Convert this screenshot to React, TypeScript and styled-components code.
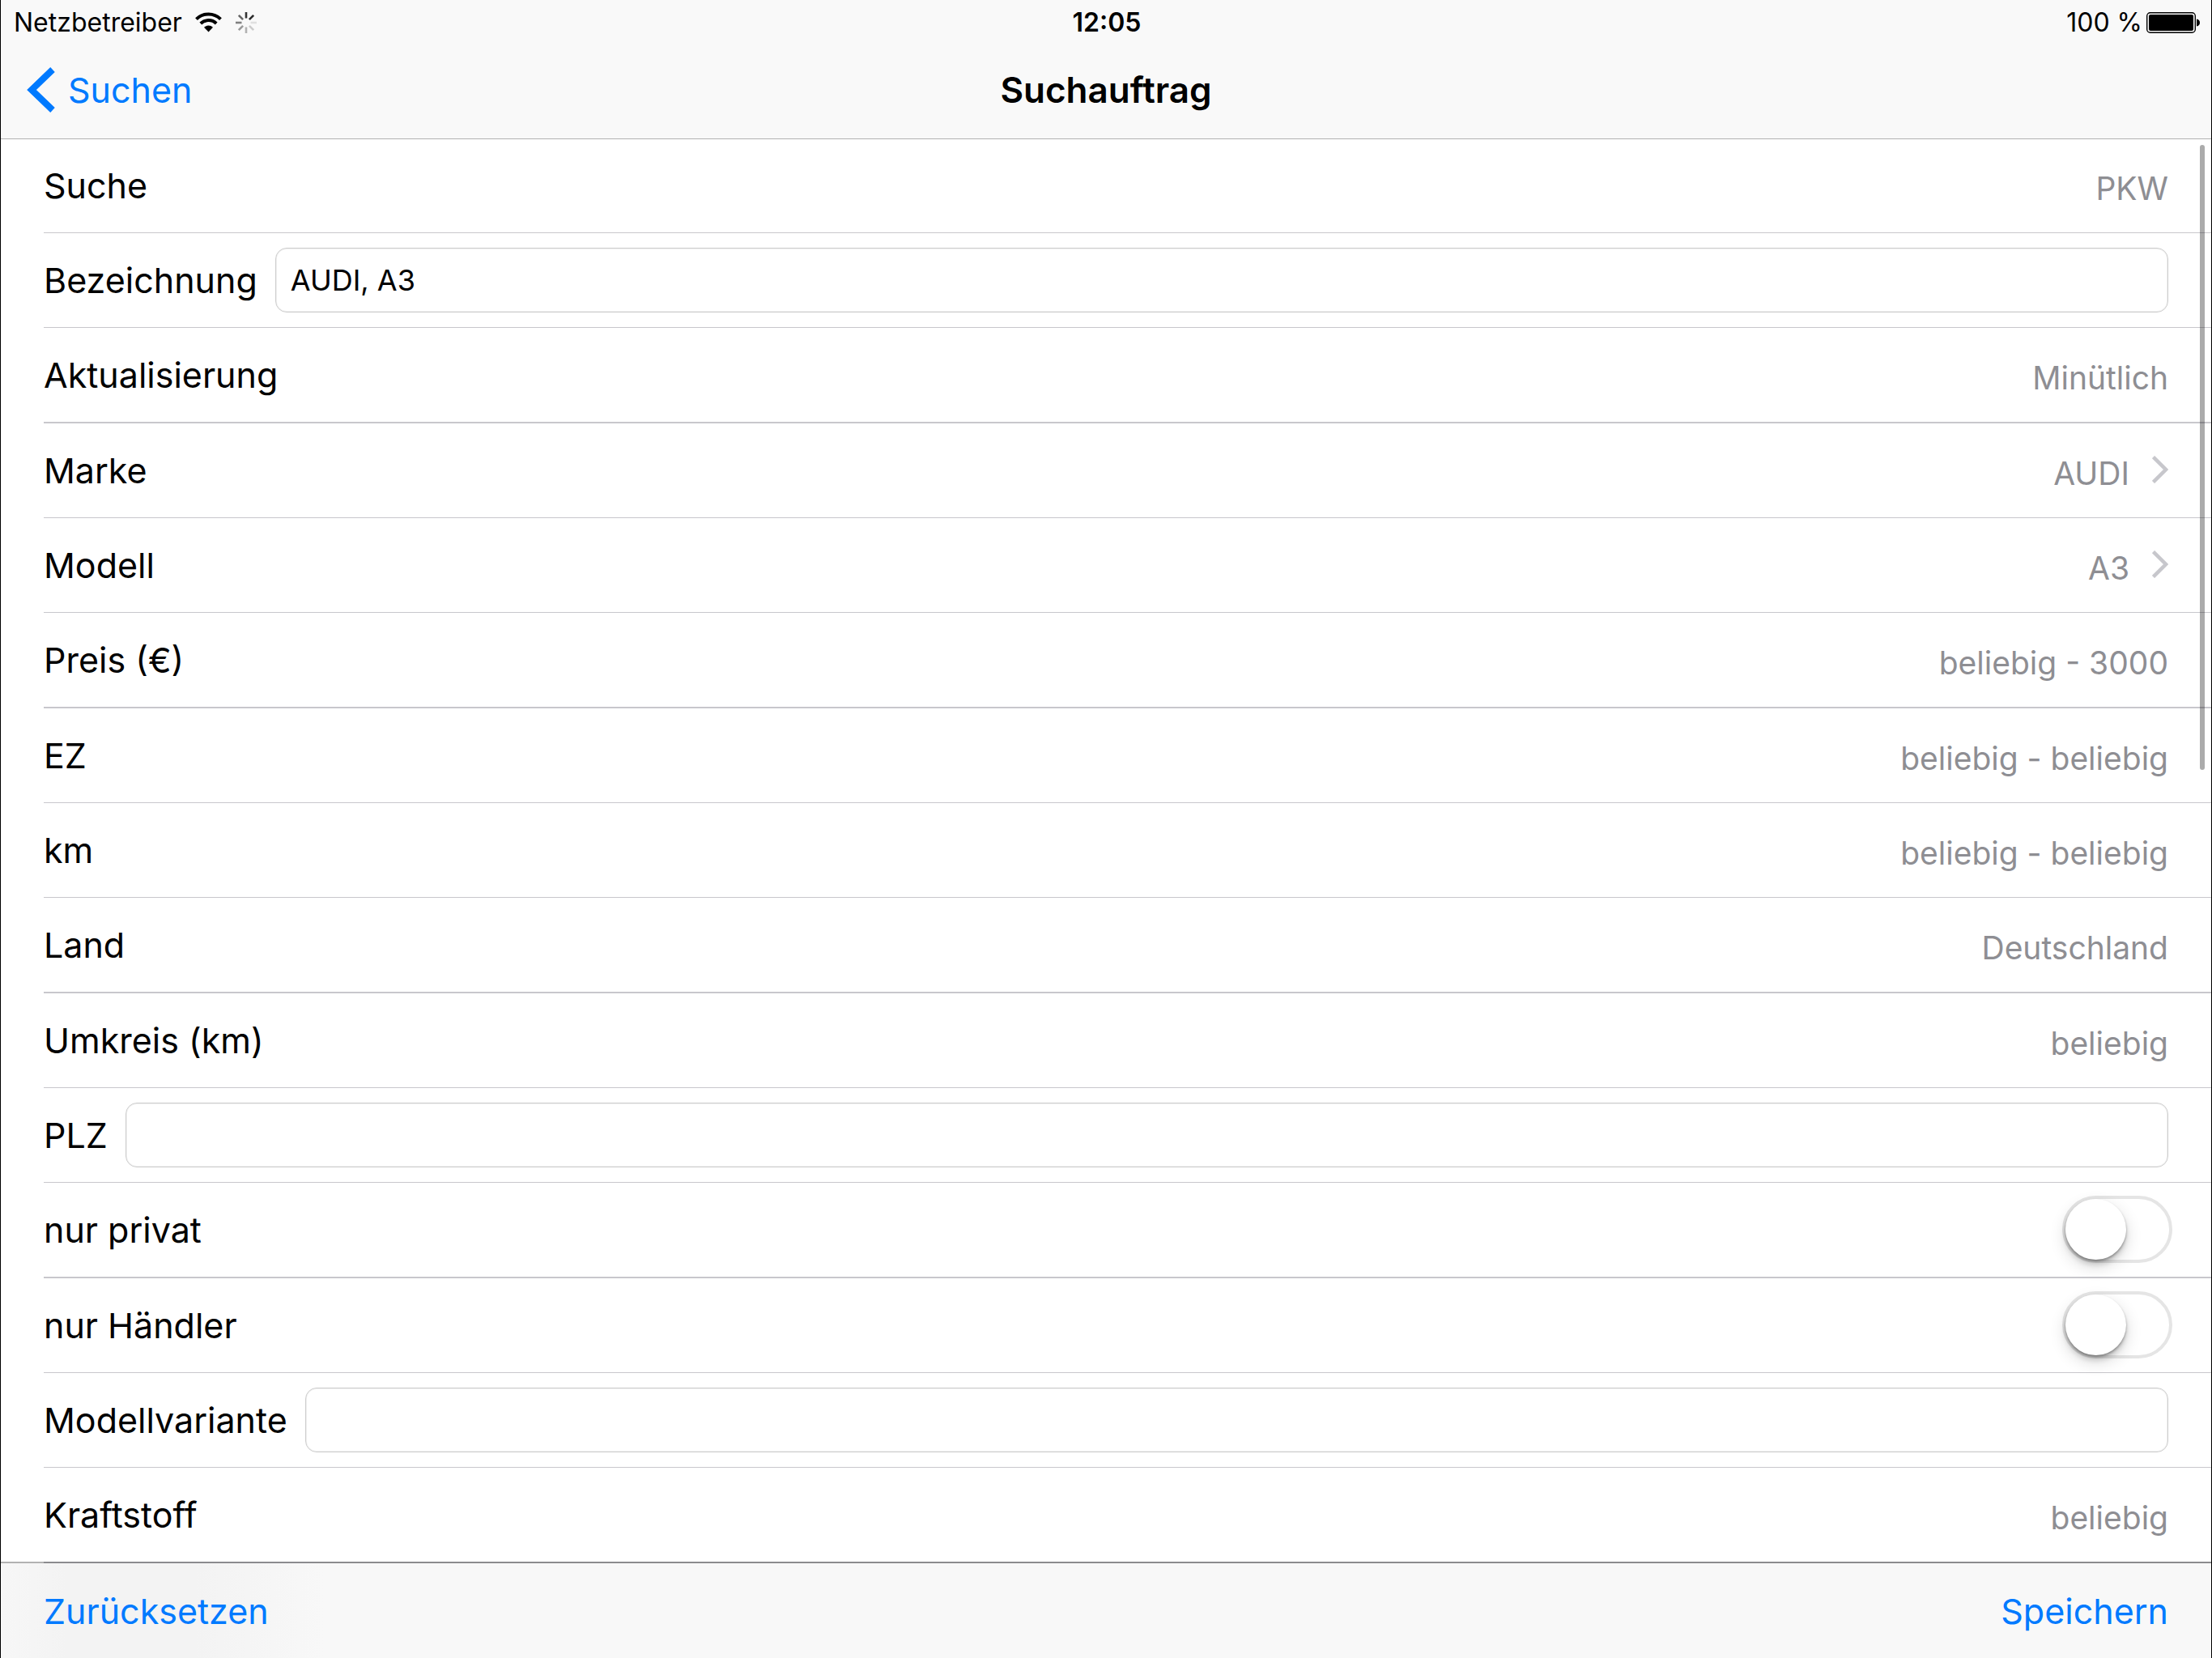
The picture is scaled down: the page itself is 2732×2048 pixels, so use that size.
import React, { useState } from 'react';
import styled, { createGlobalStyle, css } from 'styled-components';

const color = {
  tint: '#007aff',
  text: '#000000',
  secondary: '#8e8e93',
  separator: '#c8c7cc',
  bar: '#f9f9f9',
};

const GlobalStyle = createGlobalStyle`
  *, *::before, *::after { box-sizing: border-box; }
  body {
    margin: 0;
    background: #ffffff;
    color: ${color.text};
    font-family: Inter, "Liberation Sans", sans-serif;
    font-size: 43px;
    line-height: 54px;
  }
  button, input { font: inherit; color: inherit; }
`;

const Screen = styled.div`
  position: relative;
  display: flex;
  flex-direction: column;
  height: 100vh;
  border: solid #000000;
  border-width: 0 1px;
`;

const Header = styled.header`
  position: relative;
  z-index: 1;
  flex: none;
  background: ${color.bar};
  box-shadow: 0 1px 0 #b2b2b2;
`;

const StatusBar = styled.div`
  display: grid;
  grid-template-columns: 1fr auto 1fr;
  align-items: center;
  height: 55px;
  padding: 0 14px 0 16px;
  font-size: 32px;
  line-height: 40px;
`;

const StatusGroup = styled.div<{ $end?: boolean }>`
  display: flex;
  align-items: center;
  gap: ${(p) => (p.$end ? 5 : 16)}px;
  justify-content: ${(p) => (p.$end ? 'flex-end' : 'flex-start')};
`;

const Clock = styled.time`
  font-weight: 600;
`;

const NavBar = styled.nav`
  display: grid;
  grid-template-columns: 1fr auto 1fr;
  align-items: center;
  height: 116px;
  padding: 0 32px 4px;
`;

const Title = styled.h1`
  margin: 0;
  font-size: 44px;
  font-weight: 600;
`;

const TextButton = styled.button`
  display: inline-flex;
  align-items: center;
  justify-self: start;
  gap: 16px;
  padding: 0;
  border: 0;
  background: none;
  color: ${color.tint};
  cursor: pointer;
`;

const List = styled.main`
  flex: 1;
  min-height: 0;
  overflow-y: auto;
  scrollbar-width: none;
`;

const rowStyle = css`
  display: flex;
  align-items: center;
  width: calc(100% - 53px);
  height: 117px;
  margin: 0 0 0 53px;
  padding: 0 53px 0 0;
  border: 0 solid ${color.separator};
  border-bottom-width: 1px;
  background: none;
  text-align: left;

  &:nth-child(3n) {
    height: 118px;
    border-bottom-width: 2px;
  }
`;

const Row = styled.div`
  ${rowStyle}
`;

const RowLabel = styled.label`
  ${rowStyle}
`;

const RowButton = styled.button`
  ${rowStyle}
  cursor: pointer;
`;

const Name = styled.span`
  flex: none;
`;

const Value = styled.span`
  margin-left: auto;
  padding-top: 8px;
  color: ${color.secondary};
  font-size: 39px;
`;

const Chevron = styled.svg`
  flex: none;
  margin: 0 0 2px 28px;
`;

const TextField = styled.input`
  flex: 1;
  min-width: 0;
  height: 80px;
  margin-left: 22px;
  padding: 0 18px;
  border: 1px solid #cdcdcd;
  border-radius: 14px;
  outline: none;
  background: #ffffff;
  box-shadow: inset 0 0 0 1px #f0f0f0;
  font-size: 36px;
`;

const Switch = styled.input`
  appearance: none;
  display: flex;
  flex: none;
  width: 136px;
  height: 83px;
  margin: 0 -5px 2px auto;
  border: 4px solid #e5e5e5;
  border-radius: 42px;
  cursor: pointer;

  &::before {
    content: '';
    width: 75px;
    height: 75px;
    border-radius: 50%;
    background: #ffffff;
    box-shadow: 0 8px 20px rgba(0, 0, 0, 0.16), 0 6px 6px rgba(0, 0, 0, 0.14),
      0 2px 3px rgba(0, 0, 0, 0.3);
  }

  &:checked {
    justify-content: flex-end;
    border-color: #4cd964;
    background: #4cd964;
  }
`;

const ScrollIndicator = styled.div`
  position: absolute;
  z-index: 1;
  top: 179px;
  right: 8px;
  width: 6px;
  height: 772px;
  border-radius: 3px;
  background: rgba(0, 0, 0, 0.33);
  pointer-events: none;
`;

const Toolbar = styled.footer`
  position: relative;
  display: flex;
  flex: none;
  align-items: center;
  justify-content: space-between;
  height: 119px;
  margin-top: -2px;
  padding: 0 53px;
  border-top: 2px solid rgba(0, 0, 0, 0.3);
  background: linear-gradient(90deg, #f7f7f7 0, #f3f3f3 80px, #f3f3f3 240px, #f8f8f8 400px) padding-box;
`;

const WifiIcon = () => (
  <svg width="33" height="25" viewBox="0 0 33 25" aria-hidden="true">
    <g fill="none" stroke="#000" strokeWidth="4">
      <path d="M1.5 8.6A21.5 21.5 0 0 1 31.5 8.6" />
      <path d="M6.8 14A14 14 0 0 1 26.2 14" />
    </g>
    <path d="M11 18.8A8 8 0 0 1 22 18.8L16.5 24.5Z" />
  </svg>
);

const spokeShades = ['#333', '#2b2b2b', '#e0e0e0', '#ccc', '#b2b2b2', '#999', '#808080', '#666'];

const Spinner = () => (
  <svg width="28" height="28" viewBox="-14 -14 28 28" aria-hidden="true">
    {spokeShades.map((shade, i) => (
      <path
        key={shade}
        d="M0-5.5V-13"
        stroke={shade}
        strokeWidth="2.6"
        transform={`rotate(${i * 45})`}
      />
    ))}
  </svg>
);

const BatteryIcon = () => (
  <svg width="66" height="26" viewBox="0 0 66 26" aria-hidden="true">
    <rect x="0.7" y="0.7" width="59.6" height="24.6" rx="4" fill="none" stroke="#000" strokeWidth="1.4" />
    <rect x="3" y="3" width="55" height="20" rx="2" />
    <path d="M62 8.5c2.5.5 4 2 4 4.5s-1.500 4-4 4.500z" />
  </svg>
);

const Disclosure = () => (
  <Chevron width="20" height="34" viewBox="0 0 20 34" aria-hidden="true">
    <path d="M1.500 1.500L17 17 1.500 32.500" fill="none" stroke="#c7c7cc" strokeWidth="4.500" />
  </Chevron>
);

const ValueRow = ({ name, value }: { name: string; value: string }) => (
  <Row>
    <Name>{name}</Name>
    <Value>{value}</Value>
  </Row>
);

const LinkRow = ({ name, value }: { name: string; value: string }) => (
  <RowButton type="button">
    <Name>{name}</Name>
    <Value>{value}</Value>
    <Disclosure />
  </RowButton>
);

const FieldRow = ({ name, initial = '' }: { name: string; initial?: string }) => {
  const [text, setText] = useState(initial);
  return (
    <RowLabel>
      <Name>{name}</Name>
      <TextField type="text" value={text} onChange={(e) => setText(e.target.value)} />
    </RowLabel>
  );
};

const SwitchRow = ({ name }: { name: string }) => (
  <RowLabel>
    <Name>{name}</Name>
    <Switch type="checkbox" role="switch" />
  </RowLabel>
);

export default function App() {
  return (
    <>
      <GlobalStyle />
      <Screen>
        <Header>
          <StatusBar>
            <StatusGroup>
              <span>Netzbetreiber</span>
              <WifiIcon />
              <Spinner />
            </StatusGroup>
            <Clock>12:05</Clock>
            <StatusGroup $end>
              <span>100 %</span>
              <BatteryIcon />
            </StatusGroup>
          </StatusBar>
          <NavBar>
            <TextButton type="button">
              <svg width="35" height="56" viewBox="0 0 35 56" aria-hidden="true">
                <path d="M32 3L6 28l26 25" fill="none" stroke={color.tint} strokeWidth="8" />
              </svg>
              Suchen
            </TextButton>
            <Title>Suchauftrag</Title>
          </NavBar>
        </Header>
        <List>
          <ValueRow name="Suche" value="PKW" />
          <FieldRow name="Bezeichnung" initial="AUDI, A3" />
          <ValueRow name="Aktualisierung" value="Minütlich" />
          <LinkRow name="Marke" value="AUDI" />
          <LinkRow name="Modell" value="A3" />
          <ValueRow name="Preis (€)" value="beliebig - 3000" />
          <ValueRow name="EZ" value="beliebig - beliebig" />
          <ValueRow name="km" value="beliebig - beliebig" />
          <ValueRow name="Land" value="Deutschland" />
          <ValueRow name="Umkreis (km)" value="beliebig" />
          <FieldRow name="PLZ" />
          <SwitchRow name="nur privat" />
          <SwitchRow name="nur Händler" />
          <FieldRow name="Modellvariante" />
          <ValueRow name="Kraftstoff" value="beliebig" />
        </List>
        <ScrollIndicator />
        <Toolbar>
          <TextButton type="button">Zurücksetzen</TextButton>
          <TextButton type="button">Speichern</TextButton>
        </Toolbar>
      </Screen>
    </>
  );
}
